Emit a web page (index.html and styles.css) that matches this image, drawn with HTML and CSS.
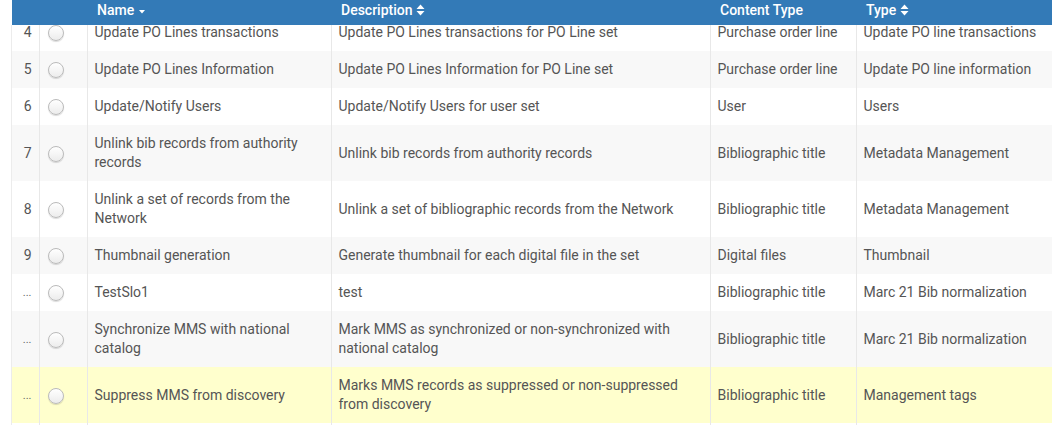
FILE: index.html
```html
<!DOCTYPE html>
<html>
<head>
<meta charset="utf-8">
<link rel="stylesheet" href="styles.css">
</head>
<body>
<div class="grid-wrap">
  <table class="grid grid-head">
    <colgroup>
      <col class="c-num"><col class="c-radio"><col class="c-name"><col class="c-desc"><col class="c-ctype"><col class="c-type">
    </colgroup>
    <thead>
      <tr>
        <th></th>
        <th></th>
        <th>Name <svg class="sort" width="8" height="12" viewBox="0 0 8 12"><path d="M1 5h6L4 8.5z" fill="#fff"/></svg></th>
        <th>Description <svg class="sort" width="9" height="14" viewBox="0 0 9 14"><path d="M0.5 6h8L4.5 1.5z M0.5 8h8L4.5 12.5z" fill="#fff"/></svg></th>
        <th>Content Type</th>
        <th>Type <svg class="sort" width="9" height="14" viewBox="0 0 9 14"><path d="M0.5 6h8L4.5 1.5z M0.5 8h8L4.5 12.5z" fill="#fff"/></svg></th>
      </tr>
    </thead>
  </table>
  <div class="viewport">
    <table class="grid grid-body">
      <colgroup>
        <col class="c-num"><col class="c-radio"><col class="c-name"><col class="c-desc"><col class="c-ctype"><col class="c-type">
      </colgroup>
      <tbody>
        <tr class="odd">
          <td class="num">4</td><td class="rad"><span class="radio"></span></td>
          <td>Update PO Lines transactions</td><td>Update PO Lines transactions for PO Line set</td><td>Purchase order line</td><td>Update PO line transactions</td>
        </tr>
        <tr class="even">
          <td class="num">5</td><td class="rad"><span class="radio"></span></td>
          <td>Update PO Lines Information</td><td>Update PO Lines Information for PO Line set</td><td>Purchase order line</td><td>Update PO line information</td>
        </tr>
        <tr class="odd">
          <td class="num">6</td><td class="rad"><span class="radio"></span></td>
          <td>Update/Notify Users</td><td>Update/Notify Users for user set</td><td>User</td><td>Users</td>
        </tr>
        <tr class="even">
          <td class="num">7</td><td class="rad"><span class="radio"></span></td>
          <td>Unlink bib records from authority records</td><td>Unlink bib records from authority records</td><td>Bibliographic title</td><td>Metadata Management</td>
        </tr>
        <tr class="odd">
          <td class="num">8</td><td class="rad"><span class="radio"></span></td>
          <td>Unlink a set of records from the Network</td><td>Unlink a set of bibliographic records from the Network</td><td>Bibliographic title</td><td>Metadata Management</td>
        </tr>
        <tr class="even">
          <td class="num">9</td><td class="rad"><span class="radio"></span></td>
          <td>Thumbnail generation</td><td>Generate thumbnail for each digital file in the set</td><td>Digital files</td><td>Thumbnail</td>
        </tr>
        <tr class="odd">
          <td class="num"><span class="dots">...</span></td><td class="rad"><span class="radio"></span></td>
          <td>TestSlo1</td><td>test</td><td>Bibliographic title</td><td>Marc 21 Bib normalization</td>
        </tr>
        <tr class="even">
          <td class="num"><span class="dots">...</span></td><td class="rad"><span class="radio"></span></td>
          <td>Synchronize MMS with national catalog</td><td>Mark MMS as synchronized or non-synchronized with national catalog</td><td>Bibliographic title</td><td>Marc 21 Bib normalization</td>
        </tr>
        <tr class="hl">
          <td class="num"><span class="dots">...</span></td><td class="rad"><span class="radio"></span></td>
          <td>Suppress MMS from discovery</td><td>Marks MMS records as suppressed or non-suppressed from discovery</td><td>Bibliographic title</td><td>Management tags</td>
        </tr>
        <tr class="odd">
          <td class="num"></td><td class="rad"></td>
          <td>&nbsp;</td><td></td><td></td><td></td>
        </tr>
      </tbody>
    </table>
  </div>
</div>
</body>
</html>
```

FILE: styles.css
```css
html, body {
  margin: 0;
  padding: 0;
  background: #fff;
}
body {
  font-family: Roboto, "Liberation Sans", Arial, sans-serif;
  font-size: 14px;
  color: #555;
  width: 1052px;
  height: 425px;
  overflow: hidden;
}
.grid-wrap {
  margin-left: 12px;
  width: 1040px;
  height: 425px;
  display: flex;
  flex-direction: column;
}
.grid {
  table-layout: fixed;
  border-collapse: collapse;
  width: 1040px;
}
.c-num { width: 27px; }
.c-radio { width: 48px; }
.c-name { width: 244px; }
.c-desc { width: 379px; }
.c-ctype { width: 146px; }
.c-type { width: 196px; }

.grid-head {
  background: #337ab7;
  flex: none;
}
.grid-head th {
  height: 25px;
  padding: 0 10px 5px;
  box-sizing: border-box;
  text-align: left;
  color: #fff;
  font-weight: 500;
  line-height: 20px;
  white-space: nowrap;
}
.sort {
  vertical-align: -2px;
  margin-left: 0;
}
.viewport {
  flex: 1;
  overflow: hidden;
  border-left: 1px solid #ececec;
  margin-left: -1px;
}
.grid-body {
  margin-top: -11px;
}
.grid-body td {
  padding: 9px 8px 9px 7px;
  height: 19px;
  line-height: 19px;
  vertical-align: middle;
  border-left: 1px solid #e8e8e8;
}
.grid-body td:first-child {
  border-left: 0;
}
.grid-body tr.odd { background: #fff; }
.grid-body tr.even { background: #f8f8f8; }
.grid-body tr.hl { background: #ffffcd; }
.num {
  text-align: right;
  padding-right: 7px !important;
  padding-left: 2px !important;
}
.dots {
  display: inline-block;
  font-size: 11px;
  line-height: 10px;
  color: #666;
  vertical-align: middle;
}
.rad {
  text-align: left;
  padding-left: 8px !important;
}
.radio {
  display: inline-block;
  width: 14px;
  height: 14px;
  border-radius: 50%;
  border: 1px solid #bbb;
  background: linear-gradient(#ffffff, #ececec);
  box-shadow: 0 1px 1px rgba(0,0,0,0.15);
  vertical-align: middle;
}
```
